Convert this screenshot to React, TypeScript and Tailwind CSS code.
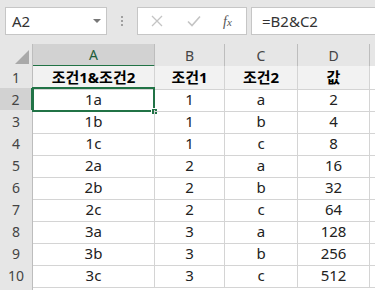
import React from 'react';

const rows = [
  ['1a', '1', 'a', '2'],
  ['1b', '1', 'b', '4'],
  ['1c', '1', 'c', '8'],
  ['2a', '2', 'a', '16'],
  ['2b', '2', 'b', '32'],
  ['2c', '2', 'c', '64'],
  ['3a', '3', 'a', '128'],
  ['3b', '3', 'b', '256'],
  ['3c', '3', 'c', '512'],
];

const font = { fontFamily: '"Noto Sans", "Noto Sans CJK KR", sans-serif' };
const cols = 'grid grid-cols-[33px_122px_70px_73px_72px_1fr]';

const App: React.FC = () => {
  return (
    <div className="w-[375px] h-[290px] overflow-hidden bg-white text-[#222]" style={font}>
      {/* formula bar */}
      <div className="h-[44px] bg-[#e6e6e6] flex items-start pt-[7px] pl-[5px]">
        <div className="w-[102px] h-[28px] bg-white border border-[#c6c6c6] flex items-center justify-between pl-[6px] pr-[5px]">
          <span className="text-[15px] text-[#333]">A2</span>
          <span className="w-0 h-0 border-l-[4px] border-r-[4px] border-t-[4px] border-l-transparent border-r-transparent border-t-[#777]" />
        </div>
        <div className="w-[30px] h-[28px] flex flex-col items-center justify-center gap-[2px]">
          <span className="w-[2px] h-[2px] bg-[#a0a0a0]" />
          <span className="w-[2px] h-[2px] bg-[#a0a0a0]" />
          <span className="w-[2px] h-[2px] bg-[#a0a0a0]" />
        </div>
        <div className="w-[110px] h-[28px] bg-white border border-[#c6c6c6] flex items-center pl-[13px]">
          <svg width="12" height="12" viewBox="0 0 12 12" className="mr-[24px]">
            <path d="M1 1L11 11M11 1L1 11" stroke="#c4c4c4" strokeWidth="1.3" />
          </svg>
          <svg width="14" height="12" viewBox="0 0 14 12" className="mr-[22px]">
            <path d="M1 6.5L5 10.5L13 1.5" stroke="#c4c4c4" strokeWidth="1.6" fill="none" />
          </svg>
          <span className="text-[14px] italic text-[#555]" style={{ fontFamily: '"Liberation Serif", serif' }}>
            f<span className="text-[11px]">x</span>
          </span>
        </div>
        <div className="flex-1 h-[28px] ml-[4px] bg-white border border-[#c6c6c6] border-r-0 flex items-center pl-[10px]">
          <span className="text-[15px] text-[#333]">=B2&amp;C2</span>
        </div>
      </div>

      {/* column header */}
      <div className={`${cols} h-[22px] bg-[#e6e6e6] text-[14px] text-[#444]`}>
        <div className="border-r border-[#bdbdbd] flex items-end justify-end pr-[3px] pb-[3px]">
          <svg width="14" height="14" viewBox="0 0 14 14" className="block shrink-0">
            <polygon points="14,0 14,14 0,14" fill="#a9a9a9" />
          </svg>
        </div>
        <div className="bg-[#d2d2d2] border-r border-[#bdbdbd] border-b-2 border-b-[#217346] flex items-center justify-center text-[#1e5e3a]">A</div>
        {['B', 'C', 'D'].map((c) => (
          <div key={c} className="border-r border-[#bdbdbd] flex items-center justify-center">{c}</div>
        ))}
        <div />
      </div>

      {/* row 1 */}
      <div className={`${cols} h-[22px]`}>
        <div className="bg-[#e6e6e6] border-r border-[#bdbdbd] border-b border-b-[#bdbdbd] flex items-center justify-center text-[14px] text-[#444]">1</div>
        {['조건1&조건2', '조건1', '조건2', '값'].map((t) => (
          <div key={t} className="bg-[#f2f2f2] border-r border-b border-[#d4d4d4] flex items-center justify-center text-[15px] font-bold text-black">{t}</div>
        ))}
        <div className="bg-white border-b border-[#d4d4d4]" />
      </div>

      {rows.map((r, i) => {
        const sel = i === 0;
        return (
          <div key={i} className={`${cols} h-[22px]`}>
            <div
              className={`border-b border-b-[#bdbdbd] flex items-center justify-center text-[14px] text-[#444] ${
                sel ? 'bg-[#d2d2d2] border-r-2 border-r-[#217346]' : 'bg-[#e6e6e6] border-r border-r-[#bdbdbd]'
              }`}
            >
              {i + 2}
            </div>
            {r.map((v, j) => (
              <div key={j} className="relative border-r border-b border-[#d4d4d4] flex items-center justify-center text-[15px] text-[#222]">
                {v}
                {sel && j === 0 && (
                  <>
                    <span className="absolute -left-[1px] -top-[1px] -right-[1px] -bottom-[1px] border-2 border-[#217346]" />
                    <span className="absolute -right-[4px] -bottom-[4px] w-[7px] h-[7px] bg-[#217346] border border-white" />
                  </>
                )}
              </div>
            ))}
            <div className="border-b border-[#d4d4d4]" />
          </div>
        );
      })}
      <div className={`${cols} h-[22px]`}>
        <div className="bg-[#e6e6e6] border-r border-[#bdbdbd]" />
      </div>
    </div>
  );
};

export default App;
